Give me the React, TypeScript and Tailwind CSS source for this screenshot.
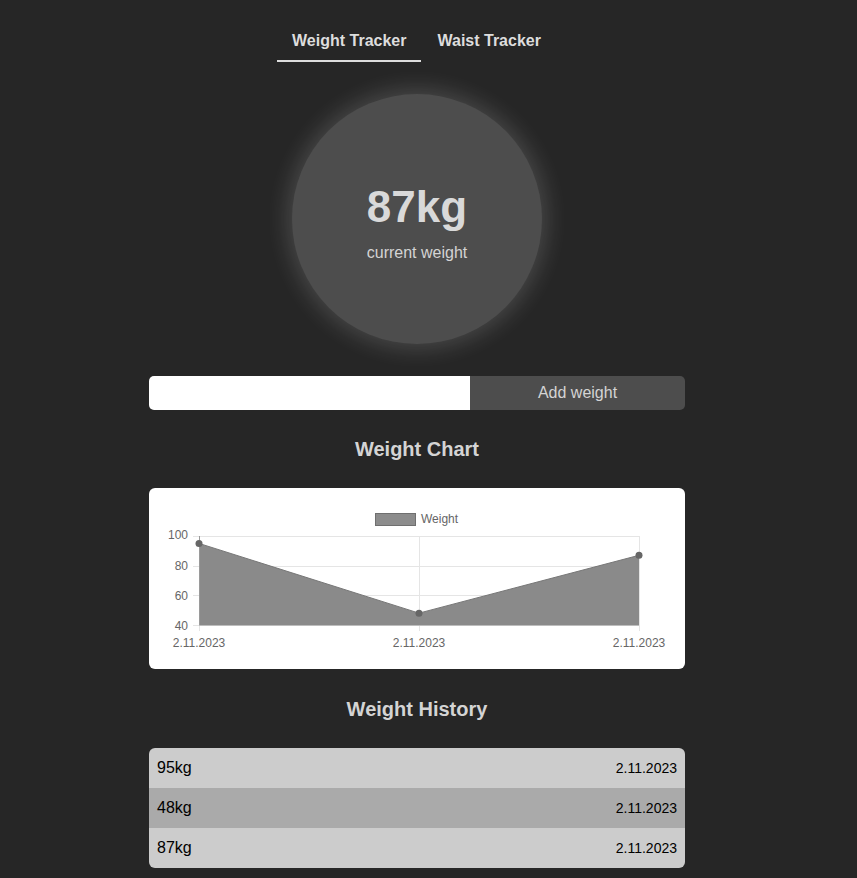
const history = [
  { weight: 95, date: "2.11.2023" },
  { weight: 48, date: "2.11.2023" },
  { weight: 87, date: "2.11.2023" },
];

// chart scale: 40..100 over plot area 48..137
const yOf = (v: number) => 137 - ((v - 40) / 60) * 89;
const xs = [50, 270, 490];

const WeightChart = () => {
  const pts = history.map((h, i) => [xs[i], yOf(h.weight)] as const);
  const line = pts.map(([x, y]) => `${x},${y}`).join(" ");
  const area = `50,137 ${line} 490,137`;

  return (
    <svg width="536" height="181" viewBox="0 0 536 181" className="block">
      {/* legend */}
      <rect x="226.5" y="25.5" width="40" height="12" fill="#8c8c8c" stroke="#6f6f6f" />
      <text x="272" y="35" fontSize="12" fill="#666" fontFamily="Liberation Sans, Arial, sans-serif">
        Weight
      </text>

      {/* grid */}
      {[48, 78, 107, 137].map((y) => (
        <line key={y} x1="44" x2="490" y1={y + 0.5} y2={y + 0.5} stroke="#e5e5e5" />
      ))}
      {xs.map((x) => (
        <line key={x} x1={x + 0.5} x2={x + 0.5} y1="48" y2="143" stroke="#e5e5e5" />
      ))}

      {/* area */}
      <polygon points={area} fill="#8a8a8a" />
      <polyline points={line} fill="none" stroke="#777" strokeWidth="1" />
      <line x1="50" x2="490" y1="137.5" y2="137.5" stroke="#bdbdbd" />
      <line x1="50.5" x2="50.5" y1="48" y2="137" stroke="#9a9a9a" />
      {pts.map(([x, y], i) => (
        <circle key={i} cx={x} cy={y} r="3.5" fill="#666" />
      ))}

      {/* y labels */}
      {[
        ["100", 47],
        ["80", 78],
        ["60", 108],
        ["40", 138],
      ].map(([t, y]) => (
        <text
          key={t}
          x="39"
          y={Number(y) + 4}
          textAnchor="end"
          fontSize="12"
          fill="#666"
          fontFamily="Liberation Sans, Arial, sans-serif"
        >
          {t}
        </text>
      ))}

      {/* x labels */}
      {xs.map((x, i) => (
        <text
          key={i}
          x={x}
          y="159"
          textAnchor="middle"
          fontSize="12"
          fill="#666"
          fontFamily="Liberation Sans, Arial, sans-serif"
        >
          2.11.2023
        </text>
      ))}
    </svg>
  );
};

export default function App() {
  return (
    <div className="min-h-[878px] bg-[#262626] font-['Liberation_Sans',Arial,sans-serif]">
      <div className="flex w-[834px] flex-col items-center pt-5 pb-[10px]">
        {/* Tabs */}
        <div className="flex">
          <button className="border-b-2 border-[#dddddd] px-[15px] pt-[12px] pb-[10px] text-[16px] leading-[18px] font-bold text-[#dddddd]">
            Weight Tracker
          </button>
          <button className="border-b-2 border-transparent px-[16px] pt-[12px] pb-[10px] text-[16px] leading-[18px] font-bold text-[#dddddd]">
            Waist Tracker
          </button>
        </div>

        {/* Current weight */}
        <div className="mt-8 flex h-[250px] w-[250px] flex-col items-center justify-center rounded-full bg-[#4d4d4d] shadow-[0_0_22px_5px_rgba(255,255,255,0.16)]">
          <div className="mt-[6px] text-[44px] leading-[50px] font-bold text-[#d9d9d9]">87kg</div>
          <div className="mt-[12px] text-[16px] leading-[18px] text-[#d4d4d4]">current weight</div>
        </div>

        {/* Input */}
        <div className="mt-8 flex h-[34px] w-[536px]">
          <input className="h-full w-[321px] rounded-l-[5px] bg-white px-2 text-[16px] text-black outline-none" />
          <button className="h-full flex-1 rounded-r-[5px] bg-[#4d4d4d] text-[16px] text-[#d4d4d4]">
            Add weight
          </button>
        </div>

        <h2 className="mt-[28px] text-[20px] leading-[23px] font-bold text-[#d4d4d4]">Weight Chart</h2>

        <div className="mt-[27px] w-[536px] overflow-hidden rounded-[6px] bg-white">
          <WeightChart />
        </div>

        <h2 className="mt-[29px] text-[20px] leading-[23px] font-bold text-[#d4d4d4]">Weight History</h2>

        <ul className="mt-[27px] w-[536px] overflow-hidden rounded-[6px]">
          {history.map((h, i) => (
            <li
              key={i}
              className={`flex h-10 items-center justify-between px-2 text-black ${
                i % 2 === 1 ? "bg-[#aaaaaa]" : "bg-[#cccccc]"
              }`}
            >
              <span className="text-[16px]">{h.weight}kg</span>
              <span className="text-[14px]">{h.date}</span>
            </li>
          ))}
        </ul>
      </div>
    </div>
  );
}
